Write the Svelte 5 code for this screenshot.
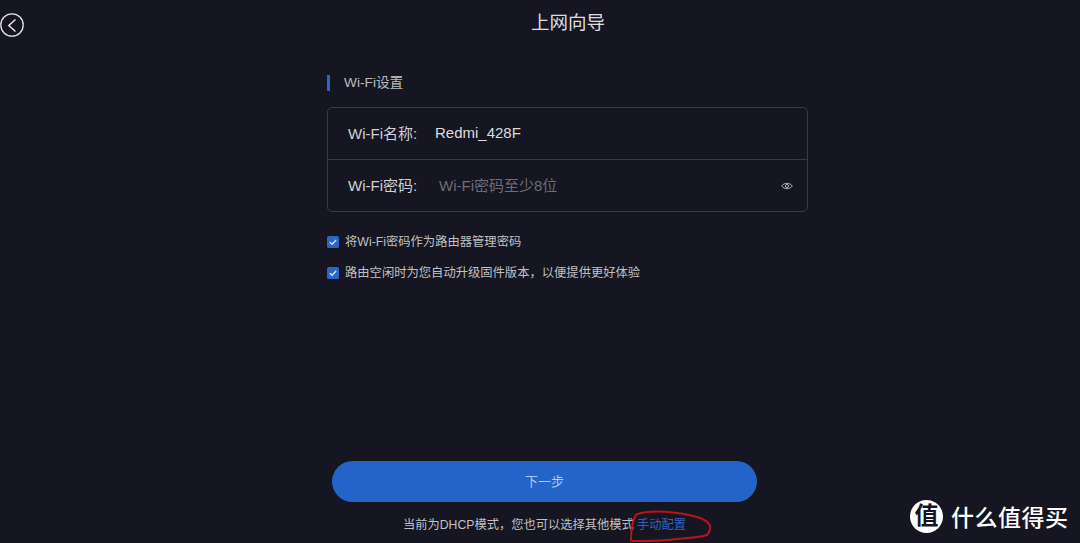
<script>
  let name = 'Redmi_428F';
</script>

<div class="page">
  <header class="top">
    <button class="back" aria-label="返回">
      <svg width="24" height="24" viewBox="0 0 24 24" fill="none" stroke="#e4e4e6" stroke-width="1.3">
        <circle cx="12" cy="12" r="11.2" />
        <path d="M15.5 6.5 L8.8 12.5 L15.5 18.5" stroke-width="1.5" />
      </svg>
    </button>
    <h1>上网向导</h1>
  </header>

  <main class="form">
    <h2>Wi-Fi设置</h2>
    <div class="card">
      <div class="row">
        <span class="label">Wi-Fi名称:</span>
        <span class="value">{name}</span>
      </div>
      <div class="row">
        <span class="label">Wi-Fi密码:</span>
        <span class="placeholder">Wi-Fi密码至少8位</span>
        <svg class="eye" width="12" height="10" viewBox="0 0 12 10" fill="none" stroke="#b4b4b8" stroke-width="1">
          <path d="M0.7 5 C3 1.4 9 1.4 11.3 5 C9 8.6 3 8.6 0.7 5 Z" />
          <circle cx="6" cy="5" r="1.6" />
        </svg>
      </div>
    </div>
    <div class="check">
      <svg class="box" width="12" height="12" viewBox="0 0 13 13">
        <rect width="13" height="13" rx="2" fill="#2a66c8" />
        <path d="M3 6.6 L5.5 9 L10 4.2" fill="none" stroke="#e8eef8" stroke-width="1.4" />
      </svg>
      <span>将Wi-Fi密码作为路由器管理密码</span>
    </div>
    <div class="check second">
      <svg class="box" width="12" height="12" viewBox="0 0 13 13">
        <rect width="13" height="13" rx="2" fill="#2a66c8" />
        <path d="M3 6.6 L5.5 9 L10 4.2" fill="none" stroke="#e8eef8" stroke-width="1.4" />
      </svg>
      <span>路由空闲时为您自动升级固件版本，以便提供更好体验</span>
    </div>
  </main>

  <footer class="bottom">
    <button class="next">下一步</button>
    <p class="hint">
      当前为DHCP模式，您也可以选择其他模式
      <span class="link">手动配置
        <svg class="scribble" width="90" height="35" viewBox="0 0 270 105" fill="none" stroke="#b8141e" stroke-width="6" stroke-linecap="round" stroke-linejoin="round">
          <path d="M18 90 C18 65 20 40 34 16 C60 6 110 6 150 11 C190 16 228 24 246 38 C258 48 260 62 246 78 C220 86 190 86 165 89 C120 94 60 97 18 95 L18 88" />
        </svg>
      </span>
    </p>
  </footer>

  <div class="brand">
    <span class="mark">值</span>
    <span class="brand-name">什么值得买</span>
  </div>
</div>

<style>
  :global(body) {
    margin: 0;
    background: #161622;
  }
  .page {
    position: relative;
    width: 1080px;
    height: 543px;
    overflow: hidden;
    background: #161622;
    color: #d8d8da;
    font-family: "Liberation Sans", "Noto Sans CJK SC", sans-serif;
  }
  .top {
    display: flex;
    justify-content: center;
    height: 46px;
    padding-left: 56px;
  }
  .back {
    position: absolute;
    left: 0;
    top: 13px;
    padding: 0;
    border: 0;
    background: none;
    line-height: 0;
  }
  h1 {
    margin: 11px 0 0;
    font-size: 18.5px;
    line-height: 23px;
    font-weight: 400;
    color: #dedee0;
  }
  .form {
    display: flex;
    flex-direction: column;
    width: 481px;
    margin: 29px 0 0 327px;
  }
  h2 {
    margin: 0;
    padding-left: 14px;
    border-left: 3px solid #2a66c8;
    font-size: 13.7px;
    line-height: 16px;
    font-weight: 400;
    color: #bcbcc0;
  }
  .card {
    margin-top: 16px;
    border: 1px solid #3a3a46;
    border-radius: 5px;
  }
  .row {
    display: flex;
    align-items: center;
    height: 51px;
    padding: 0 14px 0 20px;
    font-size: 15px;
  }
  .row + .row {
    border-top: 1px solid #3a3a46;
  }
  .label {
    width: 87px;
    margin-bottom: 2px;
    color: #d0d0d4;
  }
  .value {
    margin-bottom: 2px;
    color: #dcdcde;
  }
  .placeholder {
    margin: 0 0 2px 4px;
    font-size: 15px;
    color: #6c6c74;
  }
  .eye {
    margin-left: auto;
  }
  .check {
    display: flex;
    align-items: center;
    gap: 6px;
    margin-top: 23px;
    font-size: 12.3px;
    line-height: 14px;
    color: #c0c0c4;
  }
  .check.second {
    margin-top: 17px;
  }
  .box {
    flex: none;
  }
  .bottom {
    position: absolute;
    left: 332px;
    top: 461px;
    width: 425px;
    display: flex;
    flex-direction: column;
    align-items: center;
  }
  .next {
    width: 425px;
    height: 41px;
    padding-bottom: 3px;
    border: 0;
    border-radius: 21px;
    background: #2464c8;
    color: #b4c8e8;
    font: inherit;
    font-size: 13px;
  }
  .hint {
    margin: 16px 0 0;
    font-size: 12.25px;
    line-height: 15px;
    color: #c0c0c4;
    white-space: nowrap;
  }
  .link {
    position: relative;
    color: #2f62c0;
  }
  .scribble {
    position: absolute;
    left: -12px;
    top: -9px;
  }
  .brand {
    position: absolute;
    left: 910px;
    top: 499px;
    display: flex;
    align-items: center;
    gap: 8px;
  }
  .mark {
    display: flex;
    align-items: center;
    justify-content: center;
    width: 33px;
    height: 33px;
    border-radius: 50%;
    background: #fff;
    color: #161622;
    font-size: 24px;
    font-weight: 700;
    line-height: 1;
  }
  .brand-name {
    font-size: 23px;
    font-weight: 500;
    letter-spacing: 0.5px;
    color: #fff;
  }
</style>
